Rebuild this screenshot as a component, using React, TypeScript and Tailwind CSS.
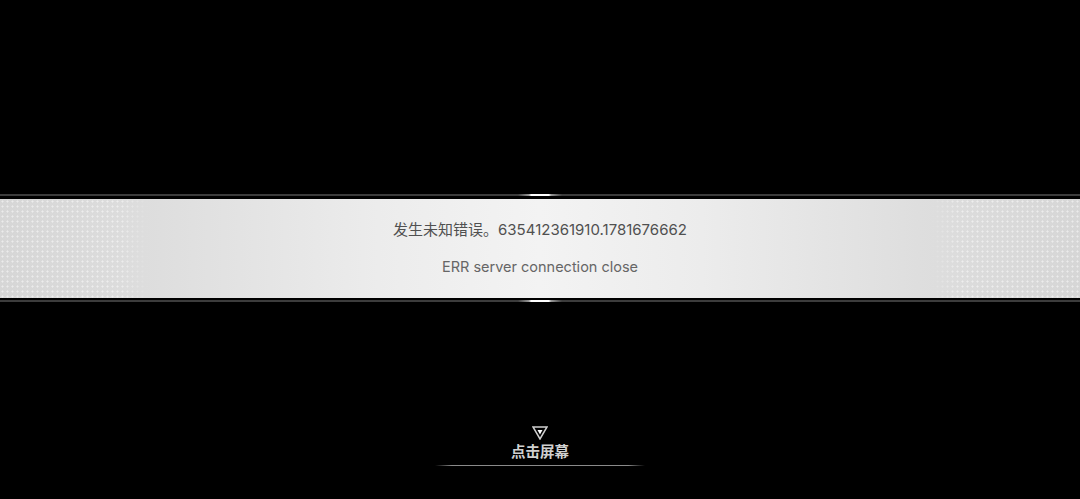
import React from "react";

const font = { fontFamily: '"Inter","Noto Sans CJK SC",sans-serif' };

export default function App() {
  return (
    <div className="w-[1080px] h-[499px] bg-black flex flex-col overflow-hidden" style={font}>
      <div className="h-[194px]" />
      {/* top rule */}
      <div className="relative h-[2px] bg-[#3c3c3c]">
        <div className="absolute left-[518px] top-0 h-[2px] w-[44px] bg-[linear-gradient(90deg,transparent,#9a9a9a_25%,#ffffff_30%,#ffffff_70%,#9a9a9a_75%,transparent)]" />
      </div>
      <div className="h-[3px]" />
      {/* banner */}
      <div className="relative h-[99px] bg-[linear-gradient(90deg,#d6d6d6_0%,#dedede_15%,#ececec_35%,#f3f3f3_50%,#ececec_65%,#dedede_85%,#d6d6d6_100%)] flex flex-col items-center">
        <div className="absolute left-0 top-0 h-full w-[150px] bg-[radial-gradient(circle,rgba(255,255,255,0.5)_0.8px,transparent_1.3px)] bg-[length:5px_5px] [mask-image:linear-gradient(90deg,black_80%,transparent)]" />
        <div className="absolute right-0 top-0 h-full w-[150px] bg-[radial-gradient(circle,rgba(255,255,255,0.5)_0.8px,transparent_1.3px)] bg-[length:5px_5px] [mask-image:linear-gradient(270deg,black_80%,transparent)]" />
        <div className="relative mt-[20px] text-[15px] leading-[22px] text-[#505050]">
          发生未知错误。635412361910.1781676662
        </div>
        <div className="relative mt-[16px] text-[14.5px] leading-[20px] text-[#666666]">
          ERR server connection close
        </div>
      </div>
      <div className="h-[2px]" />
      {/* bottom rule */}
      <div className="relative h-[2px] bg-[#3c3c3c]">
        <div className="absolute left-[518px] top-0 h-[2px] w-[44px] bg-[linear-gradient(90deg,transparent,#9a9a9a_25%,#ffffff_30%,#ffffff_70%,#9a9a9a_75%,transparent)]" />
      </div>
      <div className="flex-1 flex flex-col items-center justify-end pb-[33px]">
        <svg width="16" height="14" viewBox="0 0 16 14" className="mb-[2px]">
          <polygon points="1,1 15,1 8,13" fill="none" stroke="#cfcfcf" strokeWidth="1.5" strokeLinejoin="miter" />
          <polygon points="5.5,4 10.5,4 8,8.5" fill="#ffffff" />
        </svg>
        <div className="text-[14.5px] leading-[20px] font-semibold text-[#d0d0d0]">点击屏幕</div>
        <div className="mt-[3px] h-px w-[210px] bg-[linear-gradient(90deg,transparent,#8a8a8a_8%,#8a8a8a_92%,transparent)]" />
      </div>
    </div>
  );
}
